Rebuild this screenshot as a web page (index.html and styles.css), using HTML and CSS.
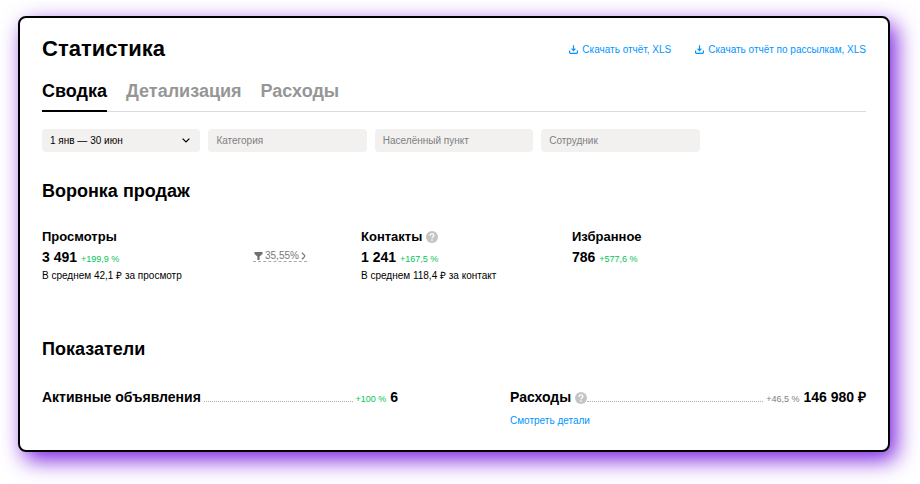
FILE: index.html
```html
<!DOCTYPE html>
<html lang="ru">
<head>
<meta charset="utf-8">
<meta name="viewport" content="width=device-width, initial-scale=1">
<title>Статистика</title>
<link rel="stylesheet" href="styles.css">
</head>
<body>
<svg class="sprite" aria-hidden="true">
  <symbol id="download" viewBox="0 0 9 9">
    <path d="M4.500 0.300v5M2.600 3.700l1.900 1.900 1.900-1.900M0.600 5.500v2a.8.8 0 0 0 .8.8h6.200a.8.8 0 0 0 .8-.8v-2" fill="none" stroke="currentColor" stroke-width="1.200"/>
  </symbol>
  <symbol id="help" viewBox="0 0 12 12">
    <circle cx="6" cy="6" r="6" fill="#c4c4c4"/>
    <path d="M4.100 4.700c0-1.200.8-1.900 1.900-1.900s1.900.7 1.900 1.700C7.900 5.800 6 5.700 6 7.200" fill="none" stroke="#fff" stroke-width="1.300"/>
    <circle cx="6" cy="9" r=".85" fill="#fff"/>
  </symbol>
</svg>
<main class="card">
  <header class="header">
    <h1>Статистика</h1>
    <div class="downloads">
      <a href="#"><svg class="download-icon"><use href="#download"/></svg>Скачать отчёт, XLS</a>
      <a href="#"><svg class="download-icon"><use href="#download"/></svg>Скачать отчёт по рассылкам, XLS</a>
    </div>
  </header>

  <nav class="tabs">
    <a class="active" href="#" aria-current="page">Сводка</a>
    <a href="#">Детализация</a>
    <a href="#">Расходы</a>
  </nav>

  <form class="filters">
    <div class="period">
      <select class="field" aria-label="Период"><option>1 янв — 30 июн</option></select>
      <svg class="chevron" viewBox="0 0 8 5"><path d="M.6.6 4 4 7.400.6" fill="none" stroke="#000" stroke-width="1.200"/></svg>
    </div>
    <input class="field" type="text" placeholder="Категория" aria-label="Категория">
    <input class="field" type="text" placeholder="Населённый пункт" aria-label="Населённый пункт">
    <input class="field" type="text" placeholder="Сотрудник" aria-label="Сотрудник">
  </form>

  <section class="section">
    <h2>Воронка продаж</h2>
    <div class="funnel">
      <div class="stat">
        <h3>Просмотры</h3>
        <p class="value">3 491 <span class="delta up">+199,9 %</span></p>
        <p class="average">В среднем 42,1 ₽ за просмотр</p>
      </div>
      <button class="rate" type="button">
        <svg class="funnel-icon" viewBox="0 0 9 8"><path d="M.5 0h8v2L5.600 4.500V8H3.400V4.500L.5 2z" fill="#707070"/></svg>
        35,55%
        <svg class="arrow" viewBox="0 0 5 8"><path d="M1 .6C1.800 2 3.800 3 3.800 4S1.800 6 1 7.400" fill="none" stroke="#777" stroke-width="1.200"/></svg>
      </button>
      <div class="stat">
        <h3>Контакты <svg class="help" role="img" aria-label="Справка"><use href="#help"/></svg></h3>
        <p class="value">1 241 <span class="delta up">+167,5 %</span></p>
        <p class="average">В среднем 118,4 ₽ за контакт</p>
      </div>
      <div class="stat">
        <h3>Избранное</h3>
        <p class="value">786 <span class="delta up">+577,6 %</span></p>
      </div>
    </div>
  </section>

  <section class="section indicators">
    <h2>Показатели</h2>
    <div class="metrics">
      <div>
        <div class="metric">
          <h3>Активные объявления</h3>
          <span class="leader"></span>
          <p class="value"><span class="delta up">+100 %</span> 6</p>
        </div>
      </div>
      <div>
        <div class="metric">
          <h3>Расходы <svg class="help" role="img" aria-label="Справка"><use href="#help"/></svg></h3>
          <span class="leader flush"></span>
          <p class="value"><span class="delta">+46,5 %</span> 146 980 ₽</p>
        </div>
        <a class="details" href="#">Смотреть детали</a>
      </div>
    </div>
  </section>
</main>
</body>
</html>
```

FILE: styles.css
```css
* {
  box-sizing: border-box;
}

body {
  margin: 0;
  padding: 16px 30px 32px 18px;
  background: #fff;
  color: #000;
  font-family: "Liberation Sans", Arial, sans-serif;
  font-size: 10px;
}

h1, h2, h3, p {
  margin: 0;
}

a {
  color: #0094ff;
  text-decoration: none;
}

.sprite {
  display: none;
}

.card {
  padding: 17px 22px 21px;
  background: #fff;
  border: 2px solid #000;
  border-radius: 8px;
  box-shadow: 6px 8px 22px #7b20e0;
}

.header {
  display: flex;
  align-items: center;
  justify-content: space-between;
}

h1 {
  font-size: 22px;
  line-height: 28px;
}

.downloads {
  display: flex;
  gap: 24px;
}

.downloads a {
  display: flex;
  align-items: center;
  gap: 4px;
}

.download-icon {
  width: 9px;
  height: 9px;
}

.tabs {
  display: flex;
  gap: 19px;
  margin-top: 16px;
  box-shadow: inset 0 -1px #dcdcdc;
}

.tabs a {
  padding-bottom: 7px;
  border-bottom: 2px solid transparent;
  color: #969696;
  font-size: 18px;
  font-weight: bold;
  line-height: 24px;
}

.tabs .active {
  border-color: #000;
  color: #000;
}

.filters {
  display: grid;
  grid-template-columns: repeat(5, 1fr);
  gap: 8px;
  margin-top: 17px;
}

.period {
  display: flex;
  position: relative;
}

.field {
  width: 100%;
  height: 23px;
  padding: 0 8px;
  appearance: none;
  background: #f2f1f0;
  border: 0;
  border-radius: 4px;
  color: #000;
  font: inherit;
}

.field::placeholder {
  color: #808080;
  opacity: 1;
}

.chevron {
  position: absolute;
  top: 9px;
  right: 10px;
  width: 8px;
  height: 5px;
  pointer-events: none;
}

.section {
  margin-top: 27px;
}

h2 {
  font-size: 18px;
  line-height: 24px;
}

.funnel {
  display: grid;
  grid-template-columns: 211fr 108fr 211fr 294fr;
  align-items: start;
  margin-top: 26px;
}

h3 {
  font-size: 13px;
  line-height: 16px;
}

.help {
  width: 12px;
  height: 12px;
  vertical-align: -2px;
}

.value {
  font-size: 14px;
  font-weight: bold;
  line-height: 20px;
}

.stat .value {
  margin-top: 2px;
}

.delta {
  color: #808080;
  font-size: 9px;
  font-weight: normal;
}

.up {
  color: #04c456;
}

.average {
  line-height: 14px;
}

.rate {
  display: flex;
  align-items: center;
  justify-self: start;
  gap: 2px;
  margin-top: 21px;
  padding: 0 1px;
  background: none;
  border: 0;
  border-bottom: 1px dashed #aaa;
  color: #777;
  font: inherit;
  line-height: 11px;
}

.funnel-icon {
  width: 9px;
  height: 8px;
}

.arrow {
  width: 5px;
  height: 8px;
}

.indicators {
  margin-top: 54px;
}

.metrics {
  display: grid;
  grid-template-columns: 1fr 1fr;
  gap: 112px;
  margin-top: 26px;
}

.metric {
  display: flex;
  align-items: baseline;
}

.metric h3 {
  font-size: 14px;
  line-height: 20px;
}

.leader {
  flex: 1;
  margin: 0 3px;
  border-bottom: 1px dotted #b0b0b0;
}

.metric .flush {
  margin-left: 0;
}

.details {
  display: block;
  margin-top: 4px;
  line-height: 16px;
}
```
